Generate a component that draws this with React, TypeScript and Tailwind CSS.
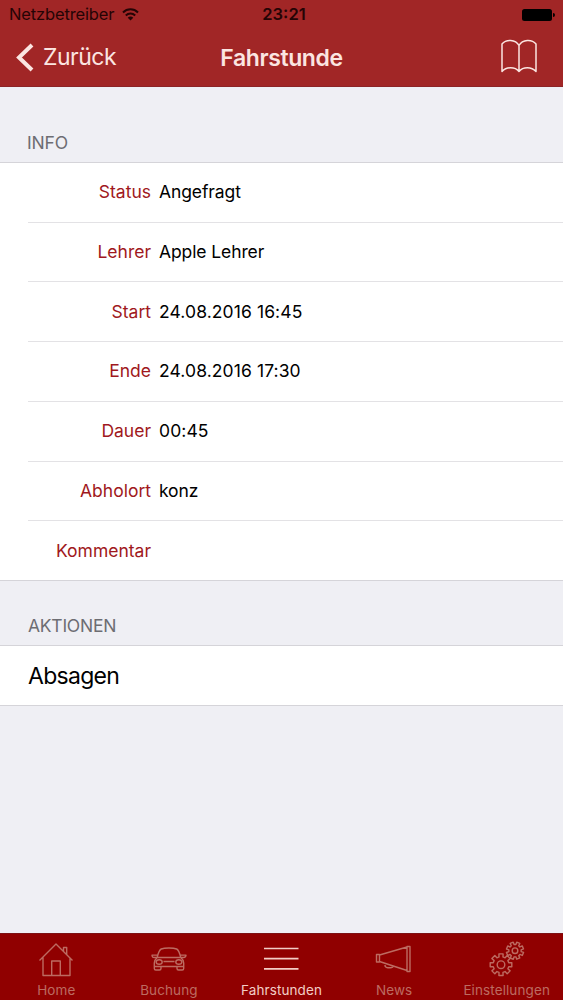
import type { ReactNode } from "react";

const details = [
  { label: "Status", value: "Angefragt" },
  { label: "Lehrer", value: "Apple Lehrer" },
  { label: "Start", value: "24.08.2016 16:45" },
  { label: "Ende", value: "24.08.2016 17:30" },
  { label: "Dauer", value: "00:45" },
  { label: "Abholort", value: "konz" },
  { label: "Kommentar", value: "" },
];

// outline of a cog with eight square teeth
function gearPath(cx: number, cy: number, outer: number, inner: number, start = 0) {
  const points: string[] = [];
  for (let i = 0; i < 8; i++) {
    const steps = [
      [inner, -0.25],
      [outer, -0.19],
      [outer, 0.19],
      [inner, 0.25],
    ];
    for (const [r, offset] of steps) {
      const a = start + (i * Math.PI) / 4 + offset;
      points.push(`${(cx + r * Math.cos(a)).toFixed(2)} ${(cy + r * Math.sin(a)).toFixed(2)}`);
    }
  }
  return `M${points.join("L")}Z`;
}

function TabIcon({ children }: { children: ReactNode }) {
  return (
    <svg
      width="40"
      height="40"
      viewBox="0 0 40 40"
      fill="none"
      stroke="currentColor"
      strokeWidth="1.4"
      strokeLinejoin="round"
      className="block"
    >
      {children}
    </svg>
  );
}

const tabs = [
  {
    name: "Home",
    icon: (
      <TabIcon>
        <path d="M3.5 21.5 20 5l16.5 16.500M7 18.500V36.500h27V18.500M15.700 36.500V22h8.600v14.500M27.500 12.500V8.500h3.200v7" />
      </TabIcon>
    ),
  },
  {
    name: "Buchung",
    icon: (
      <TabIcon>
        <path d="M8.200 18.500c1-4.500 2-7.500 4-8.500 3.500-1.300 12-1.300 15.500 0 2 1 3 4 4 8.500M8.200 18.500h23.500c2.300 1.800 3 3.300 3 5.500v5.500c0 1-.5 1.500-1.500 1.500h-3.700c-1 0-1.500-.5-1.500-1.500v-2H12v2c0 1-.5 1.500-1.500 1.500H6.800c-1 0-1.500-.5-1.500-1.500v-5.500c0-2.200.7-3.700 2.900-5.500ZM7.800 18.500H5.500c-1.800 0-2.500-.8-2.500-2.400h5.500M32.200 18.500h2.300c1.800 0 2.500-.8 2.500-2.400h-5.500M5.300 27.500H12M28 27.500h6.700M14.500 22.500h11" />
        <ellipse cx="10.200" cy="23" rx="3" ry="2.200" />
        <ellipse cx="29.800" cy="23" rx="3" ry="2.200" />
      </TabIcon>
    ),
  },
  {
    name: "Fahrstunden",
    icon: (
      <TabIcon>
        <path strokeWidth="1.700" d="M3 9.500h34.500M3 19.700h34.500M3 29.900h34.500" />
      </TabIcon>
    ),
  },
  {
    name: "News",
    icon: (
      <TabIcon>
        <path d="M2.500 15.500h3v7.500h-3zM5.500 16 33 8M5.500 22.500 33 31.500M33 7.500h3v25h-3zM11.500 24.700c-1.200 2.600.2 4 2.300 4h2.400c2 0 3-.8 3-1.700" />
      </TabIcon>
    ),
  },
  {
    name: "Einstellungen",
    icon: (
      <TabIcon>
        <path d={gearPath(14, 25.7, 11, 8)} />
        <circle cx="14" cy="25.700" r="3.800" />
        <path d={gearPath(28, 11.7, 8.7, 6.2, 0.39)} />
        <circle cx="28" cy="11.700" r="2.800" />
      </TabIcon>
    ),
  },
];

function StatusBar() {
  return (
    <div className="flex h-[29px] items-center justify-between pl-[9px] pr-[8px] text-[#250405]">
      <div className="flex w-[180px] items-center gap-[8px] text-[16.500px]">
        <span className="tracking-[-0.15px]">Netzbetreiber</span>
        <svg width="17" height="13" viewBox="0 0 17 13" fill="none" stroke="currentColor" strokeWidth="2">
          <path d="M1 4.500c4.200-4.200 10.800-4.200 15 0M3.800 7.500c2.700-2.700 6.700-2.700 9.400 0" />
          <path d="M5.700 9.700c1.700-1.600 3.900-1.600 5.600 0L8.500 12.600Z" fill="currentColor" stroke="none" />
        </svg>
      </div>
      <span className="pl-[4px] text-[16.500px] font-semibold">23:21</span>
      <div className="flex w-[180px] items-center justify-end gap-px text-black">
        <span className="h-[12px] w-[30px] rounded-[2.500px] bg-current" />
        <span className="h-[4px] w-[2px] rounded-r-full bg-current" />
      </div>
    </div>
  );
}

export default function App() {
  return (
    <div className="flex h-[1000px] w-[563px] flex-col overflow-hidden bg-[#efeff4] font-['Inter',sans-serif] text-black">
      <header className="h-[87px] border-b border-[#8c2427] bg-[#a12626]">
        <StatusBar />
        <div className="flex h-[57px] items-center justify-between pl-[16px] pr-[26px] text-[#fbe5e1]">
          <button className="flex w-[180px] items-center gap-[9px] text-[23px] tracking-[-0.5px]">
            <svg width="18" height="29" viewBox="0 0 18 29" fill="none" stroke="currentColor" strokeWidth="4">
              <path d="M16 2 3 14.500 16 27" />
            </svg>
            Zurück
          </button>
          <h1 className="pt-px text-[23px] font-semibold tracking-[-0.4px]">Fahrstunde</h1>
          <div className="flex w-[170px] justify-end pb-[3px]">
            <svg width="36" height="36" viewBox="0 0 36 36" fill="none" stroke="currentColor" strokeWidth="1.500" strokeLinejoin="round">
              <path d="M18 7.500C14.500 1 5 1 1 6v27.500c4.500-5 13-5 17 0 4-5 12.500-5 17 0V6c-4-5-13.500-5-17 1.500Zm0 0v26" />
            </svg>
          </div>
        </div>
      </header>

      <main className="flex-1">
        <h2 className="flex h-[75px] items-end px-[27px] pb-[6px] text-[17.500px] tracking-[-0.15px] text-[#6d6d72]">INFO</h2>
        <section className="h-[419px] border-y border-[#d5d4d9] bg-white pl-[28px]">
          <dl className="flex h-full flex-col divide-y divide-[#e3e2e5]">
            {details.map((item) => (
              <div key={item.label} className="flex flex-1 items-center gap-[8px] text-[17.500px]">
                <dt className="w-[123px] text-right text-[#a01820]">{item.label}</dt>
                <dd className={/^\d/.test(item.value) ? "tracking-[0.1px]" : "tracking-[-0.1px]"}>{item.value}</dd>
              </div>
            ))}
          </dl>
        </section>
        <h2 className="flex h-[64px] items-end px-[28px] pb-[6px] text-[17.500px] tracking-[-0.25px] text-[#6d6d72]">AKTIONEN</h2>
        <button className="flex h-[61px] w-full items-center border-y border-[#d5d4d9] bg-white pl-[28px] pt-px text-[23px] tracking-[-0.7px]">
          Absagen
        </button>
      </main>

      <nav className="grid h-[67px] grid-cols-5 border-t border-[#7c1014] bg-[#900000]">
        {tabs.map((tab) => (
          <button
            key={tab.name}
            className={`flex flex-col items-center pt-[5px] text-[13.500px] tracking-[0.1px] ${
              tab.name === "Fahrstunden" ? "text-[#f3cdc6]" : "text-[#bd6b61]"
            }`}
          >
            {tab.icon}
            <span className="mt-[3px] leading-[17px]">{tab.name}</span>
          </button>
        ))}
      </nav>
    </div>
  );
}
